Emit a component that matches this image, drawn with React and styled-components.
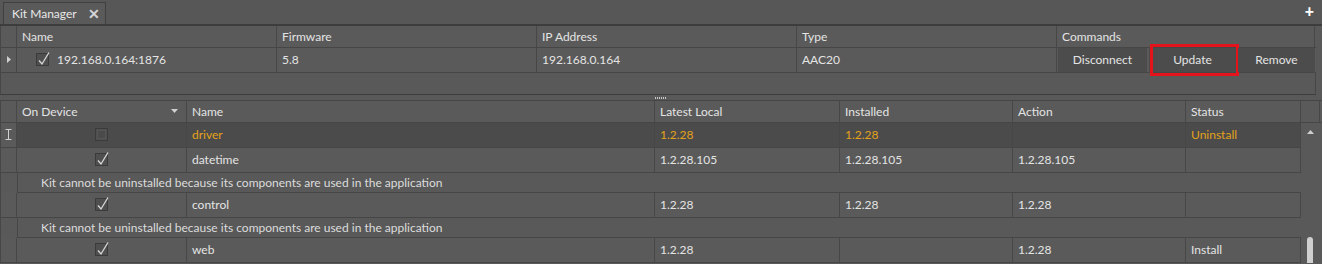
import styled, { createGlobalStyle } from "styled-components";

const GlobalStyle = createGlobalStyle`
  body {
    margin: 0;
    background: #595959;
    font-family: Lato, "Open Sans", sans-serif;
    font-size: 12px;
    color: #e4e4e4;
  }
`;

const Page = styled.div`
  width: 1322px;
  height: 264px;
  overflow: hidden;
  background: #595959;
`;

const TabBar = styled.div`
  height: 24px;
  display: flex;
  align-items: flex-end;
  justify-content: space-between;
  padding-left: 3px;
  border-bottom: 2px solid #3d3d3d;
  background: #575757;
`;

const Tab = styled.div`
  width: 103px;
  height: 22px;
  display: flex;
  align-items: center;
  justify-content: space-between;
  padding: 0 5px 1px 8px;
  box-sizing: border-box;
  border: 1px solid #404040;
  border-bottom: none;
  background: #5a5a5a;
  color: #e8e8e8;
`;

const CloseMark = styled.span`
  font-weight: 900;
  font-size: 14px;
  color: #d4d4d4;
`;

const PlusMark = styled.span`
  align-self: center;
  margin: 0 8px 2px 0;
  font-weight: 900;
  font-size: 16px;
  color: #ffffff;
  line-height: 1;
`;

const Grid = styled.div`
  display: grid;
  grid-template-columns: ${(p) => p.$cols};
  height: ${(p) => p.$h}px;
  background: ${(p) => p.$bg || "#5a5a5a"};
  border-bottom: 1px solid #464646;
  box-sizing: border-box;
`;

const Cell = styled.div`
  display: flex;
  align-items: center;
  justify-content: ${(p) => (p.$center ? "center" : "flex-start")};
  padding: 0 ${(p) => (p.$center ? 0 : 5)}px 1px;
  border-right: 1px solid #474747;
  color: ${(p) => p.$color || "#e4e4e4"};
  white-space: nowrap;
  overflow: hidden;
  position: relative;
`;

const TopTable = styled.div`
  width: 1316px;
  border-left: 1px solid #474747;
  box-sizing: border-box;
`;

const Filler = styled.div`
  height: 21px;
  border-bottom: 1px solid #3d3d3d;
  border-right: 1px solid #474747;
`;

const Commands = styled.div`
  display: flex;
  gap: 2px;
  padding-left: 1px;
`;

const CmdButton = styled.div`
  position: relative;
  flex: ${(p) => (p.$w ? `0 0 ${p.$w}px` : "1")};
  display: flex;
  align-items: center;
  justify-content: center;
  padding-bottom: 1px;
  background: #4c4c4c;
  color: #e4e4e4;
`;

const Highlight = styled.div`
  position: absolute;
  top: -4px;
  bottom: -4px;
  left: 1px;
  right: -3px;
  border: 3px solid #e3141c;
  pointer-events: none;
`;

const Splitter = styled.div`
  height: 5px;
  display: flex;
  justify-content: center;
  align-items: center;
`;

const Grip = styled.div`
  width: 12px;
  height: 2px;
  background: repeating-linear-gradient(90deg, #c8c8c8 0 1px, transparent 1px 2px);
`;

const BottomTable = styled.div`
  border-top: 1px solid #464646;
  border-left: 1px solid #474747;
`;

const Body = styled.div`
  display: flex;
`;

const Rows = styled.div`
  width: 1300px;
`;

const Message = styled.div`
  height: 20px;
  box-sizing: border-box;
  margin-left: 16px;
  padding: 0 0 1px 23px;
  display: flex;
  align-items: center;
  border-left: 1px solid #474747;
  border-bottom: 1px solid #464646;
  color: #dcdcdc;
`;

const ScrollTrack = styled.div`
  width: 19px;
  display: flex;
  flex-direction: column;
  align-items: center;
  justify-content: space-between;
  padding-top: 7px;
`;

const ScrollThumb = styled.div`
  width: 6px;
  height: 26px;
  border-radius: 3px 3px 0 0;
  background: #cfcfcf;
  margin-right: 2px;
`;

const Box = styled.div`
  width: 13px;
  height: 13px;
  box-sizing: border-box;
  border: 1px solid #3b3b3b;
  background: #4f4f4f;
  display: flex;
  align-items: center;
  justify-content: center;
  position: relative;
`;

const BoxInner = styled.div`
  width: 7px;
  height: 7px;
  background: #4a4a4a;
  border: 1px solid #555;
`;

const Check = ({ on }) => (
  <Box>
    {on ? (
      <svg width="15" height="15" viewBox="0 0 15 15" style={{ position: "absolute", left: -1, top: -3, overflow: "visible" }}>
        <path d="M3 9.5 L6 13 L13 1.5" fill="none" stroke="#d8d8d8" strokeWidth="1.3" />
      </svg>
    ) : (
      <BoxInner />
    )}
  </Box>
);

const Tri = ({ dir, color = "#cfcfcf" }) => {
  const d = { right: "M0 0 L4 3.5 L0 7 Z", down: "M0 0 L7 0 L3.5 4 Z", up: "M0 4 L3.5 0 L7 4 Z" }[dir];
  const w = dir === "right" ? 4 : 7;
  const h = dir === "right" ? 7 : 4;
  return (
    <svg width={w} height={h} viewBox={`0 0 ${w} ${h}`}>
      <path d={d} fill={color} />
    </svg>
  );
};

const IBeam = () => (
  <svg width="7" height="11" viewBox="0 0 7 11">
    <path d="M0.5 0.5 H6.5 M3.5 0.5 V10.5 M0.5 10.5 H6.5" stroke="#d0d0d0" strokeWidth="1" fill="none" />
  </svg>
);

const SortCell = styled(Cell)`
  justify-content: space-between;
  padding-right: 8px;
`;

const TOP_COLS = "16px 260px 260px 260px 260px 258px";
const BOT_COLS = "16px 170px 468px 185px 173px 173px 115px";
const HEAD_COLS = BOT_COLS + " 19px";
const ORANGE = "#e3a21a";

const kits = [
  { name: "driver", on: false, local: "1.2.28", installed: "1.2.28", action: "", status: "Uninstall", sel: true },
  { name: "datetime", on: true, local: "1.2.28.105", installed: "1.2.28.105", action: "1.2.28.105", status: "", msg: true },
  { name: "control", on: true, local: "1.2.28", installed: "1.2.28", action: "1.2.28", status: "", msg: true },
  { name: "web", on: true, local: "1.2.28", installed: "", action: "1.2.28", status: "Install" },
];

export default function App() {
  return (
    <Page>
      <GlobalStyle />
      <TabBar>
        <Tab>
          Kit Manager <CloseMark>✕</CloseMark>
        </Tab>
        <PlusMark>+</PlusMark>
      </TabBar>

      <TopTable>
        <Grid $cols={TOP_COLS} $h={22}>
          <Cell />
          <Cell>Name</Cell>
          <Cell>Firmware</Cell>
          <Cell>IP Address</Cell>
          <Cell>Type</Cell>
          <Cell>Commands</Cell>
        </Grid>
        <Grid $cols={TOP_COLS} $h={25}>
          <Cell $center>
            <Tri dir="right" />
          </Cell>
          <Cell style={{ paddingLeft: 19, gap: 8 }}>
            <Check on />
            192.168.0.164:1876
          </Cell>
          <Cell>5.8</Cell>
          <Cell>192.168.0.164</Cell>
          <Cell>AAC20</Cell>
          <Commands>
            <CmdButton $w={89}>Disconnect</CmdButton>
            <CmdButton $w={87}>
              Update
              <Highlight />
            </CmdButton>
            <CmdButton>Remove</CmdButton>
          </Commands>
        </Grid>
        <Filler />
      </TopTable>

      <Splitter>
        <Grip />
      </Splitter>

      <BottomTable>
        <Grid $cols={HEAD_COLS} $h={22}>
          <Cell />
          <SortCell>
            On Device <Tri dir="down" />
          </SortCell>
          <Cell>Name</Cell>
          <Cell>Latest Local</Cell>
          <Cell>Installed</Cell>
          <Cell>Action</Cell>
          <Cell>Status</Cell>
          <Cell />
        </Grid>
        <Body>
          <Rows>
            {kits.map((k) => {
              const c = k.sel ? ORANGE : undefined;
              return (
                <div key={k.name}>
                  <Grid $cols={BOT_COLS} $h={25} $bg={k.sel ? "#4b4b4b" : undefined}>
                    <Cell $center style={{ background: "#5a5a5a" }}>
                      {k.sel && <IBeam />}
                    </Cell>
                    <Cell $center>
                      <Check on={k.on} />
                    </Cell>
                    <Cell $color={c}>{k.name}</Cell>
                    <Cell $color={c}>{k.local}</Cell>
                    <Cell $color={c}>{k.installed}</Cell>
                    <Cell $color={c}>{k.action}</Cell>
                    <Cell $color={c}>{k.status}</Cell>
                  </Grid>
                  {k.msg && <Message>Kit cannot be uninstalled because its components are used in the application</Message>}
                </div>
              );
            })}
          </Rows>
          <ScrollTrack>
            <Tri dir="up" />
            <ScrollThumb />
          </ScrollTrack>
        </Body>
      </BottomTable>
    </Page>
  );
}
